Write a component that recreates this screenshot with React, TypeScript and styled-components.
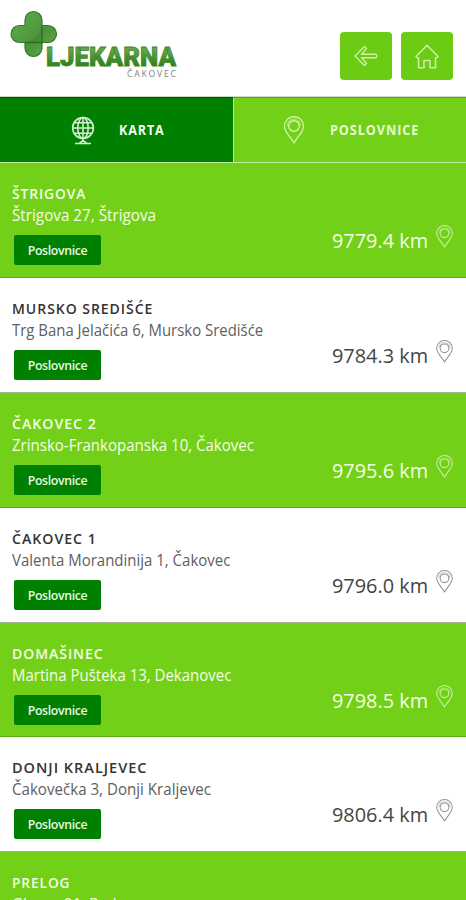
import React from 'react';
import styled, { createGlobalStyle } from 'styled-components';

const Global = createGlobalStyle`
  * { box-sizing: border-box; }
  html, body { margin: 0; background: #fff; }
  body { font-family: "Open Sans", "Noto Sans", sans-serif; height: 900px; overflow: hidden; }
`;

const Page = styled.main`
  width: 466px;
  height: 900px;
  overflow: hidden;
  background: #fff;
`;

const Header = styled.header`
  display: flex;
  justify-content: space-between;
  height: 97px;
  padding: 0 13px 0 0;
  border-bottom: 1px solid #d3dccb;
`;

const Logo = styled.svg`
  display: block;
  width: 200px;
  height: 90px;
`;

const Actions = styled.nav`
  display: flex;
  gap: 9px;
  padding-top: 32px;
`;

const IconButton = styled.button`
  display: grid;
  place-items: center;
  width: 52px;
  height: 48px;
  padding: 0;
  border: 0;
  border-radius: 4px;
  background: #6ccb13;
`;

const Tabs = styled.div`
  display: grid;
  grid-template-columns: 234px 1fr;
  height: 66px;
  border-bottom: 1px solid #c5e99c;
`;

const Tab = styled.div<{ $active?: boolean }>`
  display: flex;
  align-items: center;
  padding-left: ${p => (p.$active ? 71 : 49)}px;
  gap: ${p => (p.$active ? 24 : 25)}px;
  color: ${p => (p.$active ? '#f4fff0' : '#e8fad2')};
  background: ${p => (p.$active ? '#008000' : '#73d018')};
  border-top: 1px solid ${p => (p.$active ? '#004f00' : '#54ac0b')};
  border-right: ${p => (p.$active ? '1px solid #b9e598' : '0')};
  svg { flex: none; }
`;

const TabLabel = styled.span<{ $scale: number }>`
  font-size: 13.6px;
  font-weight: 700;
  line-height: 20px;
  letter-spacing: 1px;
  white-space: nowrap;
  transform: scaleX(${p => p.$scale});
  transform-origin: left;
`;

const Row = styled.section<{ $green: boolean }>`
  display: flex;
  justify-content: space-between;
  height: 114.8px;
  padding: 19px 12px 0;
  color: ${p => (p.$green ? '#f3fde5' : '#606060')};
  background: ${p => (p.$green ? '#73d018' : '#fff')};
  border-bottom: 1px solid ${p => (p.$green ? '#57ab16' : '#a5b797')};
  &:first-of-type { height: 115.2px; }
`;

const Details = styled.div`
  display: flex;
  flex-direction: column;
  align-items: flex-start;
`;

const Name = styled.h2<{ $green: boolean; $scale: number }>`
  margin: 0;
  font-size: 14.7px;
  font-weight: 600;
  line-height: 22px;
  letter-spacing: 1px;
  white-space: nowrap;
  color: ${p => (p.$green ? '#f3fde5' : '#333')};
  transform: scaleX(${p => p.$scale});
  transform-origin: left;
`;

const Address = styled.p<{ $green: boolean; $scale: number }>`
  margin: 0;
  font-size: 15.6px;
  font-weight: ${p => (p.$green ? 500 : 400)};
  line-height: 23px;
  white-space: nowrap;
  transform: scaleX(${p => p.$scale});
  transform-origin: left;
`;

const Branches = styled.button`
  width: 87px;
  height: 30px;
  margin: 8px 0 0 2px;
  padding: 1px 0 0;
  border: 0;
  border-radius: 2px;
  color: #e9f9e4;
  background: #008000;
  font: 600 12.3px/29px "Open Sans", "Noto Sans", sans-serif;
  letter-spacing: -0.35px;
`;

const Distance = styled.div`
  display: flex;
  align-items: flex-start;
  width: 122px;
  padding-top: 43px;
`;

const Km = styled.span<{ $green: boolean }>`
  width: 104px;
  margin-top: -1px;
  font-size: 20.5px;
  line-height: 32px;
  white-space: nowrap;
  color: ${p => (p.$green ? '#f3fde5' : '#454545')};
  transform: scaleX(0.97);
  transform-origin: left;
`;

function Pin({ w, h, color }: { w: number; h: number; color: string }) {
  return (
    <svg width={w} height={h} viewBox="0 0 20 27" fill="none" stroke={color} strokeWidth="1.25" strokeLinejoin="round">
      <path d="M10 26 C7.5 21 .8 15.5 .8 9.8 A9.2 9.2 0 0 1 19.2 9.8 C19.2 15.5 12.5 21 10 26Z" />
      <circle cx="10" cy="9.7" r="5.1" />
      <path d="M3.4 9.7 A6.6 6.6 0 0 1 16.6 9.7" opacity=".5" />
    </svg>
  );
}

function Globe() {
  return (
    <svg width="24" height="29" viewBox="0 0 24 29" fill="none" stroke="#d9f0d7" strokeWidth="1.5">
      <circle cx="12" cy="12" r="10.4" />
      <ellipse cx="12" cy="12" rx="5.2" ry="10.4" />
      <path d="M12 1.6V26M1.6 12H22.4M3.3 6.7H20.7M3.3 17.3H20.7M4 27.4H20M8.5 27 12 24.5 15.5 27" />
    </svg>
  );
}

function Brand() {
  return (
    <Logo viewBox="0 0 200 90" role="img">
      <defs>
        <linearGradient id="leaf" x1="0" y1="0" x2="1" y2="1">
          <stop offset="0" stopColor="#63ad50" />
          <stop offset=".6" stopColor="#4b9439" />
          <stop offset="1" stopColor="#6aae54" />
        </linearGradient>
        <linearGradient id="word" x1="0" y1="0" x2="0" y2="1">
          <stop offset=".25" stopColor="#62a44a" />
          <stop offset=".85" stopColor="#287b13" />
        </linearGradient>
      </defs>
      <path d="M25 25.5V20A8.5 8.5 0 0 1 42 20V25.5H48A8.5 8.5 0 0 1 48 42.5H42V48A8.5 8.5 0 0 1 25 48V42.5H19.5A8.5 8.5 0 0 1 19.5 25.5Z" fill="url(#leaf)" stroke="#347a2a" strokeWidth="1.2" />
      <path d="M25 42.5H42V25.5" fill="none" stroke="#28691f" strokeWidth="1.3" />
      <path d="M25 42.5C34 40 40 34 42 25.5V42.5Z" fill="#357e29" opacity=".35" />
      <text x="46" y="66" textLength="130" lengthAdjust="spacingAndGlyphs" fontFamily="Roboto" fontWeight="900" fontSize="25.3" fill="url(#word)" stroke="#3f8b2b" strokeWidth=".8">LJEKARNA</text>
      <text x="127" y="76.7" textLength="49" fontFamily="Open Sans" fontSize="8.6" fill="#7e7e7e">ČAKOVEC</text>
    </Logo>
  );
}

const places = [
  { name: 'ŠTRIGOVA', address: 'Štrigova 27, Štrigova', km: '9779.4', ns: 0.938, as: 0.977 },
  { name: 'MURSKO SREDIŠĆE', address: 'Trg Bana Jelačića 6, Mursko Središće', km: '9784.3', ns: 0.954, as: 0.957 },
  { name: 'ČAKOVEC 2', address: 'Zrinsko-Frankopanska 10, Čakovec', km: '9795.6', ns: 0.965, as: 0.963 },
  { name: 'ČAKOVEC 1', address: 'Valenta Morandinija 1, Čakovec', km: '9796.0', ns: 0.965, as: 0.961 },
  { name: 'DOMAŠINEC', address: 'Martina Pušteka 13, Dekanovec', km: '9798.5', ns: 0.953, as: 0.961 },
  { name: 'DONJI KRALJEVEC', address: 'Čakovečka 3, Donji Kraljevec', km: '9806.4', ns: 0.987, as: 0.969 },
  { name: 'PRELOG', address: 'Glavna 21, Prelog', km: '9808.1', ns: 0.93, as: 0.965 },
];

export default function App() {
  return (
    <Page>
      <Global />
      <Header>
        <Brand />
        <Actions>
          <IconButton aria-label="Natrag">
            <svg width="24" height="22" viewBox="0 0 24 22" fill="none" stroke="#cdf0a6" strokeWidth="1.4" strokeLinejoin="round">
              <path d="M10.5 1.5 1 11 10.5 20.5 12.5 18.5 7.5 12.8H22Q23.5 11 22 9.2H7.5L12.5 3.5Z" />
            </svg>
          </IconButton>
          <IconButton aria-label="Početna">
            <svg width="24" height="25" viewBox="0 0 24 25" fill="none" stroke="#cdf0a6" strokeWidth="1.5" strokeLinejoin="round">
              <path d="M1 12.5 12 1.2 23 12.5 21 14.3 20.5 13.8V23.7H15V16.5H9V23.7H3.5V13.8L3 14.3Z" />
            </svg>
          </IconButton>
        </Actions>
      </Header>
      <Tabs>
        <Tab $active>
          <Globe />
          <TabLabel $scale={0.92}>KARTA</TabLabel>
        </Tab>
        <Tab>
          <Pin w={22} h={28} color="#d7f3b6" />
          <TabLabel $scale={0.93}>POSLOVNICE</TabLabel>
        </Tab>
      </Tabs>
      {places.map((p, i) => {
        const green = i % 2 === 0;
        return (
          <Row key={p.name} $green={green}>
            <Details>
              <Name $green={green} $scale={p.ns}>{p.name}</Name>
              <Address $green={green} $scale={p.as}>{p.address}</Address>
              <Branches>Poslovnice</Branches>
            </Details>
            <Distance>
              <Km $green={green}>{p.km} km</Km>
              <Pin w={17} h={23} color={green ? '#caefa2' : '#959595'} />
            </Distance>
          </Row>
        );
      })}
    </Page>
  );
}
